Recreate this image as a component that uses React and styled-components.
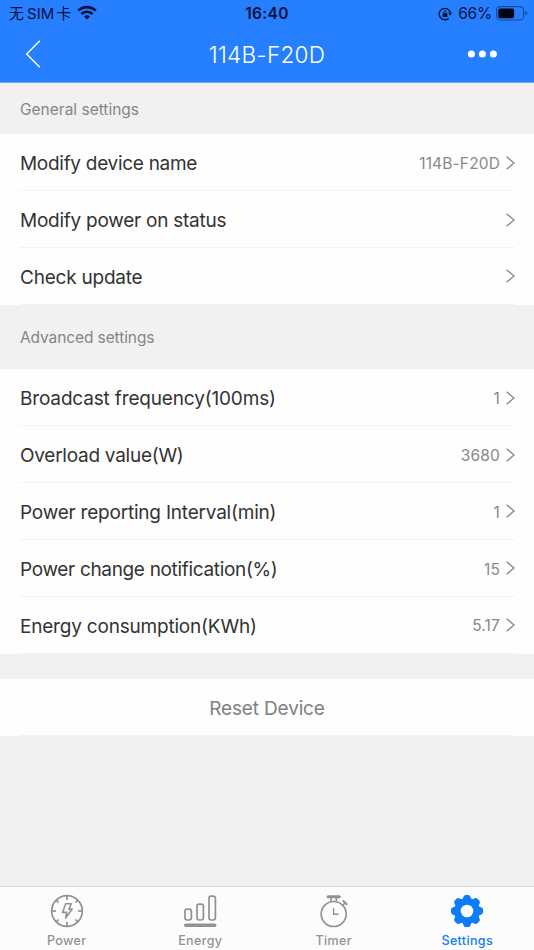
import React from 'react';
import styled, { createGlobalStyle } from 'styled-components';

const generalSettings = [
    { label: 'Modify device name', value: '114B-F20D', spacing: -0.29 },
    { label: 'Modify power on status', value: '', spacing: -0.25 },
    { label: 'Check update', value: '', spacing: -0.22 },
]

const advancedSettings = [
    { label: 'Broadcast frequency(100ms)', value: '1', spacing: -0.16 },
    { label: 'Overload value(W)', value: '3680', spacing: -0.26 },
    { label: 'Power reporting Interval(min)', value: '1', spacing: -0.21 },
    { label: 'Power change notification(%)', value: '15', spacing: -0.33 },
    { label: 'Energy consumption(KWh)', value: '5.17', spacing: -0.2 },
]

const WifiIcon = () => (
    <svg width="20" height="15" viewBox="0 0 20 15" fill="none" stroke="#06103a" strokeWidth="2.7">
        <path d="M1.3 5.6 A12.4 12.4 0 0 1 18.7 5.6" />
        <path d="M4.5 9 A7.9 7.9 0 0 1 15.5 9" />
        <path d="M10 14.6 L7 11.6 A4.3 4.3 0 0 1 13 11.6 Z" fill="#06103a" stroke="none" />
    </svg>
)

const RotationLockIcon = () => (
    <svg width="14" height="14" viewBox="0 0 14 14" fill="none" stroke="#06103a">
        <path d="M12.3 5.2 A5.7 5.7 0 1 0 10.6 11.4" strokeWidth="1.4" />
        <path d="M10 5.6 L14 5.6 L12.2 8.8 Z" fill="#06103a" stroke="none" />
        <rect x="4.6" y="6.2" width="4.8" height="3.8" rx="0.5" fill="#06103a" stroke="none" />
        <path d="M5.7 6.5 V5.2 A1.3 1.3 0 0 1 8.3 5.2 V6.5" strokeWidth="0.9" />
    </svg>
)

const BatteryIcon = () => (
    <svg width="32" height="15" viewBox="0 0 32 15">
        <rect x="0.6" y="0.6" width="27" height="13.4" rx="3.6" fill="none" stroke="#1746a0" strokeWidth="1.1" />
        <rect x="2.3" y="2.4" width="15.8" height="9.8" rx="1.8" fill="#000414" />
        <path d="M29.3 5 Q31.2 5.6 31.2 7.3 T29.3 9.6 Z" fill="#1746a0" />
    </svg>
)

const BackIcon = () => (
    <svg width="16" height="28" viewBox="0 0 16 28" fill="none" stroke="#fff" strokeWidth="1.4">
        <path d="M14.8 0.8 L1.7 14 L14.8 27.2" />
    </svg>
)

const MoreIcon = () => (
    <svg width="30" height="8" viewBox="0 0 30 8" fill="#fff">
        <circle cx="4.4" cy="4" r="3.5" />
        <circle cx="15.4" cy="4" r="3.5" />
        <circle cx="26.4" cy="4" r="3.5" />
    </svg>
)

const ChevronIcon = () => (
    <svg width="9" height="14" viewBox="0 0 9 14" fill="none" stroke="#858585" strokeWidth="1.25">
        <path d="M0.6 0.7 L8 7 L0.6 13.3" />
    </svg>
)

const PowerIcon = () => (
    <svg width="36" height="36" viewBox="-18 -18 36 36" fill="none" stroke="#929292" strokeWidth="1.7">
        <circle r="15.3" />
        {[0, 45, 90, 135, 180, 225, 270, 315].map((angle) => (
            <path key={angle} d={angle % 90 ? 'M0 -15 V-12' : 'M0 -15 V-11'} transform={`rotate(${angle})`} />
        ))}
        <path d="M-1.3 -7.3 H4.3 L1.9 -1.9 H5.2 L-1.4 7 L-0.3 1.4 H-4.4 Z" strokeWidth="1.6" strokeLinejoin="round" />
    </svg>
)

const EnergyIcon = () => (
    <svg width="36" height="36" viewBox="-18 -18 36 36" fill="none" stroke="#929292" strokeWidth="1.7">
        <rect x="-15" y="-1.8" width="6.4" height="10.8" rx="2.2" />
        <rect x="-3" y="-6.9" width="6.4" height="15.9" rx="2.2" />
        <rect x="9" y="-14.9" width="6.4" height="23.9" rx="2.2" />
        <path d="M-14.3 14.3 H14.7" strokeWidth="3.4" strokeLinecap="round" />
    </svg>
)

const TimerIcon = () => (
    <svg width="36" height="36" viewBox="-18 -18 36 36" fill="none" stroke="#929292" strokeWidth="1.7">
        <circle cx="-0.3" cy="3" r="12.5" />
        <path d="M-5.9 -14.3 H5.3" strokeWidth="3" strokeLinecap="round" />
        <path d="M-2.9 -13 V-9 M2.3 -13 V-9" strokeWidth="1.7" />
        <path d="M-0.4 -2.8 V3.3 H4.6" strokeWidth="1.4" />
        <path d="M9 -6 L11.6 -8.6" strokeWidth="1.6" />
        <path d="M8.8 -10.5 L13.2 -6.3" strokeWidth="2" />
    </svg>
)

const SettingsIcon = () => (
    <svg width="36" height="36" viewBox="-18 -18 36 36">
        <g fill="#0c7cf8">
            {[0, 45, 90, 135, 180, 225, 270, 315].map((angle) => (
                <path key={angle} d="M-5.2 -10 L-3.4 -14.5 Q-2.8 -16 -1.2 -16 H1.2 Q2.8 -16 3.4 -14.5 L5.2 -10 Z" transform={`rotate(${angle})`} />
            ))}
            <circle r="12.9" />
        </g>
        <circle r="6.3" fill="#fcfcfc" />
    </svg>
)

const tabs = [
    { label: 'Power', icon: PowerIcon },
    { label: 'Energy', icon: EnergyIcon },
    { label: 'Timer', icon: TimerIcon },
    { label: 'Settings', icon: SettingsIcon, active: true },
]

const SettingsList = ({ items }) => (
    <List>
        {items.map((item) => (
            <Row key={item.label}>
                <Label $spacing={item.spacing}>{item.label}</Label>
                <Value>{item.value}</Value>
                <ChevronIcon />
            </Row>
        ))}
    </List>
)

export default function App() {
    return (
        <Screen>
            <GlobalStyle />
            <Header>
                <StatusBar>
                    <Carrier><span>无</span><span>SIM</span><span>卡</span><WifiIcon /></Carrier>
                    <Clock>16:40</Clock>
                    <BatteryStatus>
                        <RotationLockIcon />
                        <Percent>66%</Percent>
                        <BatteryIcon />
                    </BatteryStatus>
                </StatusBar>
                <NavBar>
                    <BackIcon />
                    <Title>114B-F20D</Title>
                    <MoreIcon />
                </NavBar>
            </Header>
            <SectionTitle $height={51}>General settings</SectionTitle>
            <SettingsList items={generalSettings} />
            <SectionTitle $height={64.4} $spacing={-0.1}>Advanced settings</SectionTitle>
            <SettingsList items={advancedSettings} />
            <ResetBlock>
                <ResetButton>Reset Device</ResetButton>
            </ResetBlock>
            <TabBar>
                {tabs.map(({ label, icon: Icon, active }) => (
                    <Tab key={label} $active={active}>
                        <Icon />
                        <TabLabel>{label}</TabLabel>
                    </Tab>
                ))}
            </TabBar>
        </Screen>
    )
}

// Styles
const GlobalStyle = createGlobalStyle`
    * {
        box-sizing: border-box;
    }
    body {
        margin: 0;
        font-family: Inter, "Noto Sans CJK SC", sans-serif;
    }
    svg {
        display: block;
        flex: none;
    }
`;

const Screen = styled.main`
    display: flex;
    flex-direction: column;
    width: 534px;
    height: 950px;
    overflow: hidden;
    background: #f1f1f1;
`;

const Header = styled.header`
    flex: none;
    height: 83px;
    background: #267fff;
    border-bottom: 1px solid #72a6ee;
`;

const StatusBar = styled.div`
    display: grid;
    grid-template-columns: 1fr auto 1fr;
    align-items: center;
    height: 27px;
    padding: 0 6px 0 9px;
    color: #06103a;
`;

const Carrier = styled.div`
    display: flex;
    align-items: center;
    gap: 3px;
    font-size: 15px;
    line-height: 26px;

    span:nth-child(3) {
        margin-left: -1px;
    }
    svg {
        margin-left: 3px;
        margin-top: -2px;
    }
`;

const Clock = styled.time`
    margin-left: -3px;
    font-size: 15.5px;
    font-weight: 600;
    letter-spacing: 0.3px;
`;

const BatteryStatus = styled.div`
    display: flex;
    align-items: center;
    justify-content: flex-end;
`;

const Percent = styled.span`
    margin: 0 4px 0 6px;
    font-size: 15.5px;
    letter-spacing: -0.2px;
`;

const NavBar = styled.nav`
    display: grid;
    grid-template-columns: 30px 1fr 30px;
    align-items: center;
    height: 54px;
    padding: 0 37px 0 25px;
`;

const Title = styled.h1`
    margin: 0;
    padding-left: 12px;
    color: #fff;
    font-size: 22.5px;
    font-weight: 300;
    letter-spacing: 0.3px;
    text-align: center;
`;

const SectionTitle = styled.h2`
    flex: none;
    display: flex;
    align-items: center;
    height: ${(props) => props.$height}px;
    margin: 0;
    padding: 2px 0 0 20px;
    color: #858585;
    font-size: 15.5px;
    font-weight: 400;
    letter-spacing: ${(props) => props.$spacing || 0}px;
`;

const List = styled.div`
    flex: none;
    background: #fefefe;
`;

const Row = styled.div`
    display: flex;
    align-items: center;
    height: 56.9px;
    margin: 0 19px 0 20px;
    padding-top: 1.4px;
    border-bottom: 1px solid #f3f3f3;
`;

const Label = styled.span`
    flex: 1;
    padding-top: 1.8px;
    color: #333;
    font-size: 19px;
    letter-spacing: ${(props) => props.$spacing}px;
    white-space: nowrap;
`;

const Value = styled.span`
    margin-right: 6px;
    padding-top: 1.4px;
    color: #888;
    font-size: 15.5px;
    letter-spacing: 0.15px;
`;

const ResetBlock = styled.div`
    flex: none;
    height: 57px;
    margin-top: 25.5px;
    background: #fefefe;
`;

const ResetButton = styled.button`
    display: block;
    width: 494px;
    height: 57px;
    margin: 0 20px;
    padding: 2px 0 0;
    border: 0;
    border-bottom: 1px solid #f3f3f3;
    background: none;
    color: #808080;
    font-family: inherit;
    font-size: 19px;
    letter-spacing: -0.15px;
`;

const TabBar = styled.footer`
    flex: none;
    display: grid;
    grid-template-columns: repeat(4, 1fr);
    height: 64.5px;
    margin-top: auto;
    border-top: 1px solid #d6d6d6;
    background: #fcfcfc;
`;

const Tab = styled.div`
    display: flex;
    flex-direction: column;
    align-items: center;
    padding-top: 6px;
    color: ${(props) => (props.$active ? '#0c7cf8' : '#929292')};
`;

const TabLabel = styled.span`
    margin-top: 4px;
    font-size: 12.5px;
    font-weight: 500;
    line-height: 16px;
    letter-spacing: 0.35px;
`;
